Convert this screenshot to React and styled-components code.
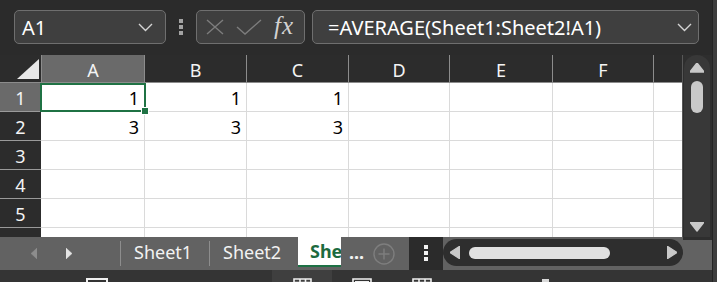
import React from "react";
import styled, { createGlobalStyle } from "styled-components";

const GlobalStyle = createGlobalStyle`
  html, body {
    margin: 0;
    padding: 0;
    background: #2b2b2b;
  }
  body {
    font-family: "Noto Sans", "Open Sans", sans-serif;
  }
`;

const COLUMNS = ["A", "B", "C", "D", "E", "F", ""];
const ROWS = [
  ["1", "1", "1"],
  ["3", "3", "3"],
  [],
  [],
  [],
  [],
];

function App() {
  return (
    <>
      <GlobalStyle />
      <Window>
        <Main>
          <Toolbar>
            <NameBox>
              <span>A1</span>
              <Chevron />
            </NameBox>
            <Grip>
              <Dot />
              <Dot />
              <Dot />
            </Grip>
            <FxBox>
              <svg width="18" height="16" viewBox="0 0 18 16">
                <path d="M1 1 L17 15 M17 1 L1 15" stroke="#7d7d7d" strokeWidth="1.4" fill="none" />
              </svg>
              <svg width="26" height="16" viewBox="0 0 26 16">
                <path d="M1 8 L9 15 L25 1" stroke="#7d7d7d" strokeWidth="1.4" fill="none" />
              </svg>
              <Fx>fx</Fx>
            </FxBox>
            <FormulaBox>
              <span>=AVERAGE(Sheet1:Sheet2!A1)</span>
              <Chevron />
            </FormulaBox>
          </Toolbar>

          <Body>
            <Sheet>
              <Corner>
                <svg width="41" height="28" viewBox="0 0 41 28">
                  <polygon points="17,24 39,24 39,4" fill="#e8e8e8" />
                </svg>
              </Corner>
              {COLUMNS.map((c, i) => (
                <ColHead key={c + i} $active={i === 0}>
                  {c}
                </ColHead>
              ))}
              {ROWS.map((row, r) => (
                <React.Fragment key={r}>
                  {/* row 6 sits under the tab bar, its number is never seen */}
                  <RowHead $active={r === 0}>{r < 5 ? r + 1 : ""}</RowHead>
                  {COLUMNS.map((c, i) => (
                    <Cell key={c + i}>
                      {row[i] || ""}
                      {r === 0 && i === 0 && (
                        <Selection>
                          <Handle />
                        </Selection>
                      )}
                    </Cell>
                  ))}
                </React.Fragment>
              ))}
            </Sheet>
            <VScroll>
              <VTrack>
                <Arrow dir="up" />
                <VThumb />
                <Spacer />
                <Arrow dir="down" />
              </VTrack>
            </VScroll>
          </Body>

          <TabBar>
            <TabNav>
              <NavTri dir="left" color="#8d8d8d" />
              <NavTri dir="right" color="#e4e4e4" />
            </TabNav>
            <TabSep />
            <Tab>Sheet1</Tab>
            <TabSep />
            <Tab>Sheet2</Tab>
            <ActiveTab>She</ActiveTab>
            <More>...</More>
            <AddSheet>
              <svg width="22" height="22" viewBox="0 0 22 22">
                <circle cx="11" cy="11" r="10" stroke="#7e7e7e" strokeWidth="1.4" fill="none" />
                <path d="M11 5.5 V16.5 M5.5 11 H16.5" stroke="#7e7e7e" strokeWidth="1.4" />
              </svg>
            </AddSheet>
            <SplitGrip>
              <Dot $light />
              <Dot $light />
              <Dot $light />
            </SplitGrip>
            <HScroll>
              <HTrack>
                <NavTri dir="left" color="#c9c9c9" big />
                <HThumb />
                <Spacer />
                <NavTri dir="right" color="#c9c9c9" big />
              </HTrack>
            </HScroll>
            <ScrollCorner />
          </TabBar>

          <StatusBar>
            <StatusIcon $left={86}>
              <svg width="22" height="8" viewBox="0 0 22 8">
                <path d="M1 8 V1 H21 V8" stroke="#f0f0f0" strokeWidth="2" fill="none" />
              </svg>
            </StatusIcon>
            <ViewButton $left={164} $selected>
              <svg width="19" height="6" viewBox="0 0 19 6">
                <path d="M1 6 V1 H18 V6 M7 1 V6 M12.5 1 V6 M1 4.5 H18" stroke="#f0f0f0" strokeWidth="1.6" fill="none" />
              </svg>
            </ViewButton>
            <ViewButton $left={0}>
              <svg width="20" height="6" viewBox="0 0 20 6">
                <path d="M1 6 V1 H19 V6" stroke="#f0f0f0" strokeWidth="1.6" fill="none" />
                <rect x="3" y="3" width="14" height="3" fill="#f0f0f0" />
              </svg>
            </ViewButton>
            <ViewButton $left={0}>
              <svg width="20" height="6" viewBox="0 0 20 6">
                <path d="M1 6 V1 H19 V6 M7 1 V6 M13 1 V6 M1 4.5 H19" stroke="#f0f0f0" strokeWidth="1.6" fill="none" />
              </svg>
            </ViewButton>
            <ZoomKnob $left={90} />
          </StatusBar>
        </Main>
        <Edge />
      </Window>
    </>
  );
}

export default App;

function Chevron() {
  return (
    <svg width="15" height="9" viewBox="0 0 15 9">
      <path d="M1 1 L7.5 7.5 L14 1" stroke="#d4d4d4" strokeWidth="1.4" fill="none" />
    </svg>
  );
}

function Arrow({ dir }) {
  const pts = dir === "up" ? "7,0 14,9 0,9" : "0,0 14,0 7,9";
  return (
    <ArrowBox>
      <svg width="14" height="10" viewBox="0 0 14 10">
        <polygon points={pts} fill="#c9c9c9" stroke="#c9c9c9" strokeWidth="1.5" strokeLinejoin="round" />
      </svg>
    </ArrowBox>
  );
}

function NavTri({ dir, color, big }) {
  const w = big ? 10 : 6;
  const h = big ? 13 : 11;
  const pts = dir === "left" ? `${w},0 ${w},${h} 0,${h / 2}` : `0,0 0,${h} ${w},${h / 2}`;
  return (
    <svg width={w} height={h} viewBox={`0 0 ${w} ${h}`}>
      <polygon points={pts} fill={color} stroke={color} strokeWidth={big ? 1.2 : 0.5} strokeLinejoin="round" />
    </svg>
  );
}

const Window = styled.div`
  width: 717px;
  height: 282px;
  display: flex;
  overflow: hidden;
  background: #2b2b2b;
`;

const Main = styled.div`
  width: 712px;
  display: flex;
  flex-direction: column;
`;

const Edge = styled.div`
  width: 5px;
  border-left: 1px solid #242424;
  background: #3d3d3d;
`;

const Toolbar = styled.div`
  height: 55px;
  box-sizing: border-box;
  padding: 10px 0 0 14px;
  display: flex;
  align-items: flex-start;
`;

const Field = styled.div`
  height: 34px;
  box-sizing: border-box;
  border: 1px solid #6f6f6f;
  border-radius: 5px;
  background: #3f3f3f;
  display: flex;
  align-items: center;
  color: #ffffff;
  font-size: 20px;
  white-space: nowrap;
`;

const NameBox = styled(Field)`
  width: 152px;
  padding: 0 12px 0 7px;
  justify-content: space-between;
`;

const Grip = styled.div`
  width: 30px;
  height: 34px;
  display: flex;
  flex-direction: column;
  align-items: center;
  justify-content: center;
  gap: 2px;
`;

const Dot = styled.span`
  width: 4px;
  height: 4px;
  background: ${(p) => (p.$light ? "#f2f2f2" : "#a3a3a3")};
`;

const FxBox = styled(Field)`
  width: 109px;
  padding: 0 0 0 9px;
  gap: 13px;
  svg:nth-child(2) {
    margin-left: -1px;
  }
`;

const Fx = styled.span`
  font-family: "Liberation Serif", "DejaVu Serif", serif;
  font-style: italic;
  font-size: 25px;
  line-height: 30px;
  color: #d2d2d2;
  margin-left: -1px;
  margin-top: -2px;
  letter-spacing: 1px;
`;

const FormulaBox = styled(Field)`
  width: 387px;
  margin-left: 7px;
  padding: 0 6px 0 15px;
  justify-content: space-between;
`;

const Body = styled.div`
  height: 182px;
  display: flex;
`;

const Sheet = styled.div`
  display: grid;
  grid-template-columns: 41px 103px 102px 102px 101px 103px 101px 29px;
  grid-template-rows: 28px repeat(6, 29px);
  width: 682px;
  height: 182px;
  overflow: hidden;
  background: #ffffff;
  font-size: 18px;
`;

const Corner = styled.div`
  background: #2c2c2c;
  border-bottom: 1px solid #8c8c8c;
  box-sizing: border-box;
  line-height: 0;
`;

const ColHead = styled.div`
  box-sizing: border-box;
  background: ${(p) => (p.$active ? "#6a6a6a" : "#2c2c2c")};
  border-left: 1px solid #8c8c8c;
  border-bottom: 1px solid #8c8c8c;
  color: #f4f4f4;
  text-align: center;
  line-height: 30px;
`;

const RowHead = styled.div`
  box-sizing: border-box;
  background: ${(p) => (p.$active ? "#6a6a6a" : "#2c2c2c")};
  border-bottom: 1px solid #9a9a9a;
  color: #f4f4f4;
  text-align: center;
  line-height: 30px;
`;

const Cell = styled.div`
  position: relative;
  box-sizing: border-box;
  border-left: 1px solid #dadada;
  border-bottom: 1px solid #dadada;
  color: #000000;
  text-align: right;
  padding-right: 5px;
  line-height: 30px;
  &:nth-child(8n + 2) {
    border-left: none;
  }
`;

const Selection = styled.div`
  position: absolute;
  top: 0;
  left: -1px;
  right: -2px;
  bottom: -1px;
  border: 2px solid #1f7244;
  z-index: 2;
`;

const Handle = styled.div`
  position: absolute;
  right: -5px;
  bottom: -5px;
  width: 6px;
  height: 6px;
  background: #1f7244;
  border: 1px solid #ffffff;
`;

const VScroll = styled.div`
  width: 30px;
  box-sizing: border-box;
  background: #2e2e2e;
  border-left: 1px solid #575757;
  padding: 0 2px 0 1px;
  display: flex;
`;

const VTrack = styled.div`
  flex: 1;
  background: #383838;
  border-radius: 13px 13px 0 0;
  display: flex;
  flex-direction: column;
  align-items: center;
  padding: 8px 0 5px;
`;

const ArrowBox = styled.div`
  line-height: 0;
`;

const VThumb = styled.div`
  width: 12px;
  height: 32px;
  margin-top: 8px;
  border-radius: 6px;
  background: #c9c9c9;
`;

const Spacer = styled.div`
  flex: 1;
`;

const TabBar = styled.div`
  height: 33px;
  display: flex;
  align-items: stretch;
  background: #626262;
  font-size: 18px;
`;

const TabNav = styled.div`
  width: 120px;
  display: flex;
  align-items: center;
  padding-left: 31px;
  gap: 29px;
  box-sizing: border-box;
`;

const TabSep = styled.div`
  width: 1px;
  margin: 4px 0;
  background: #8d8d8d;
`;

const Tab = styled.div`
  width: 88px;
  padding-left: 13px;
  box-sizing: border-box;
  color: #f2f2f2;
  line-height: 31px;
`;

const ActiveTab = styled.div`
  width: 43px;
  height: 30px;
  box-sizing: border-box;
  overflow: hidden;
  white-space: nowrap;
  background: #ffffff;
  border-bottom: 2px solid #1e7145;
  padding-left: 12px;
  color: #1c6b3f;
  font-weight: 700;
  line-height: 29px;
`;

const More = styled.div`
  width: 31px;
  padding-left: 8px;
  box-sizing: border-box;
  color: #f2f2f2;
  font-weight: 700;
  line-height: 30px;
`;

const AddSheet = styled.div`
  width: 37px;
  display: flex;
  align-items: center;
  padding-left: 1px;
  box-sizing: border-box;
`;

const SplitGrip = styled.div`
  width: 34px;
  background: #2b2b2b;
  display: flex;
  flex-direction: column;
  align-items: center;
  justify-content: center;
  gap: 2px;
  padding-bottom: 2px;
  box-sizing: border-box;
`;

const HScroll = styled.div`
  width: 240px;
  padding: 2px 0 4px;
  box-sizing: border-box;
  display: flex;
`;

const HTrack = styled.div`
  flex: 1;
  background: #2e2e2e;
  border-radius: 14px;
  display: flex;
  align-items: center;
  padding: 0 6px 0 7px;
`;

const HThumb = styled.div`
  width: 141px;
  height: 12px;
  margin-left: 9px;
  border-radius: 6px;
  background: #e1e1e1;
`;

const ScrollCorner = styled.div`
  width: 29px;
  border-top: 3px solid #2e2e2e;
  box-sizing: border-box;
  background: #626262;
`;

const StatusBar = styled.div`
  height: 12px;
  background: #343434;
  display: flex;
  overflow: hidden;
`;

const StatusIcon = styled.div`
  margin-left: ${(p) => p.$left}px;
  padding-top: 8px;
  line-height: 0;
`;

const ViewButton = styled.div`
  margin-left: ${(p) => p.$left}px;
  width: 60px;
  padding-top: 8px;
  display: flex;
  justify-content: center;
  line-height: 0;
  background: ${(p) => (p.$selected ? "#3f3f3f" : "transparent")};
`;

const ZoomKnob = styled.div`
  margin-left: ${(p) => p.$left}px;
  margin-top: 9px;
  width: 7px;
  height: 7px;
  background: #d8d8d8;
`;
